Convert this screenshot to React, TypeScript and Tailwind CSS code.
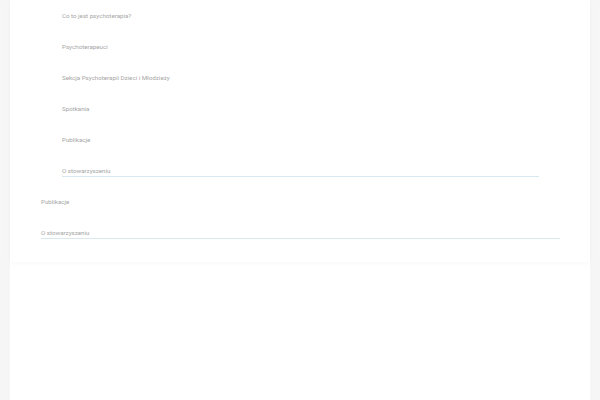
const inner = [
  "Co to jest psychoterapia?",
  "Psychoterapeuci",
  "Sekcja Psychoterapii Dzieci i Młodzieży",
  "Spotkania",
  "Publikacje",
  "O stowarzyszeniu",
];

const outer = ["Publikacje", "O stowarzyszeniu"];

function Item({ label, underline }: { label: string; underline?: boolean }) {
  return (
    <div className="h-[31px] pt-[11.5px]">
      <div
        className={
          "leading-[9px] pb-[0.5px] text-[6.2px] text-[#a6a6a6] " +
          (underline ? "border-b border-[#d9e7ee]" : "border-b border-transparent")
        }
      >
        {label}
      </div>
    </div>
  );
}

export default function App() {
  return (
    <div
      className="min-h-[400px] bg-[#f6f6f6] px-[10px]"
      style={{ fontFamily: "Roboto, 'Liberation Sans', sans-serif" }}
    >
      <div className="min-h-[400px] bg-white">
        <div className="bg-white pl-[31px] pr-[30px] pb-[14px] shadow-[0_1px_4px_rgba(0,0,0,0.035)]">
          <div className="px-[21px]">
            {inner.map((l, i) => (
              <Item key={l} label={l} underline={i === inner.length - 1} />
            ))}
          </div>
          {outer.map((l, i) => (
            <Item key={l + i} label={l} underline={i === outer.length - 1} />
          ))}
        </div>
      </div>
    </div>
  );
}
